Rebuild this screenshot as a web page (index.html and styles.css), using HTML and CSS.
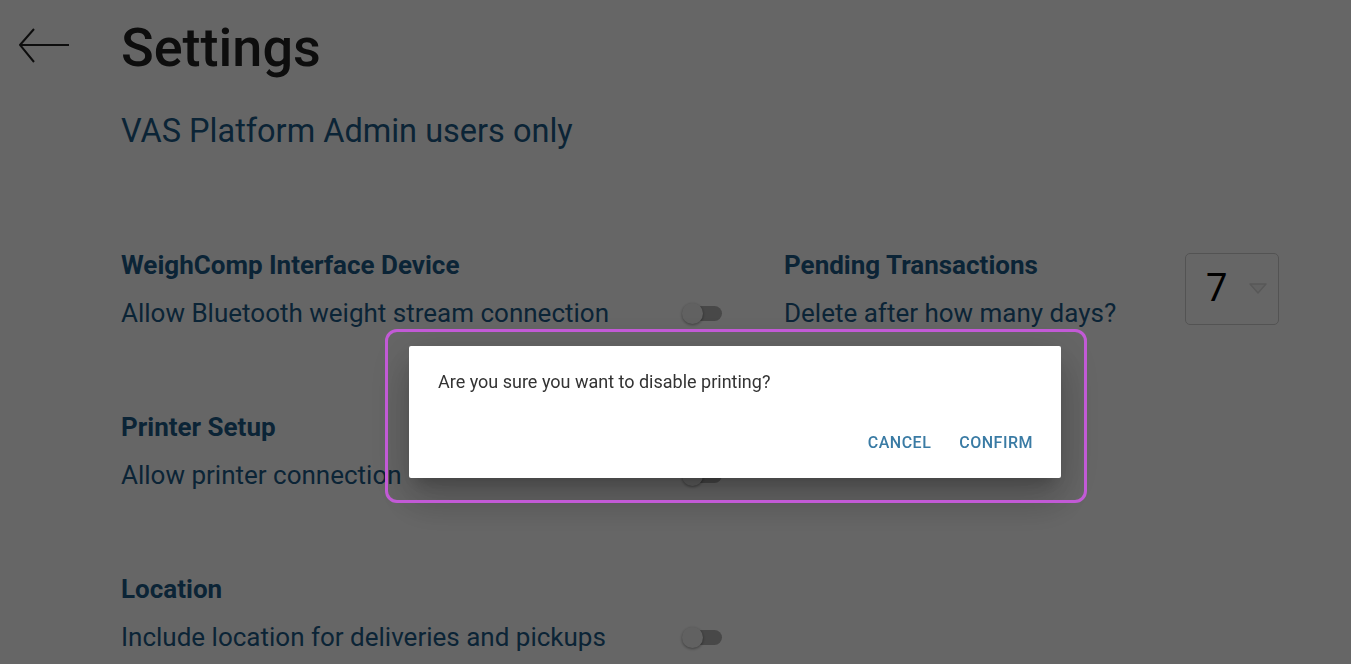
FILE: index.html
```html
<!DOCTYPE html>
<html lang="en">
<head>
    <meta charset="UTF-8">
    <meta name="viewport" content="width=device-width, initial-scale=1.0">
    <title>Settings</title>
    <link rel="stylesheet" href="styles.css">
</head>
<body>
    <div class="page">
        <div class="topbar">
            <svg class="back" width="50" height="36" viewBox="0 0 50 36">
                <path d="M1 17 H50 M15 1 L1 17 L15 34" fill="none" stroke="#222" stroke-width="2"/>
            </svg>
            <h1>Settings</h1>
        </div>

        <div class="content">
            <h2 class="subtitle">VAS Platform Admin users only</h2>

            <div class="settings-grid">
                <div class="setting">
                    <div class="setting-title">WeighComp Interface Device</div>
                    <div class="setting-row">
                        <span>Allow Bluetooth weight stream connection</span>
                        <span class="switch"><span class="thumb"></span></span>
                    </div>
                </div>

                <div class="setting setting-select">
                    <div>
                        <div class="setting-title">Pending Transactions</div>
                        <div class="setting-row">
                            <span>Delete after how many days?</span>
                        </div>
                    </div>
                    <div class="select">
                        <span>7</span>
                        <svg width="18" height="11" viewBox="0 0 18 11">
                            <path d="M1 1 H17 L9 10 Z" fill="#f4f4f4" stroke="#dcdcdc" stroke-width="1.5" stroke-linejoin="round"/>
                        </svg>
                    </div>
                </div>

                <div class="setting">
                    <div class="setting-title">Printer Setup</div>
                    <div class="setting-row">
                        <span>Allow printer connection</span>
                        <span class="switch"><span class="thumb"></span></span>
                    </div>
                </div>
                <div></div>

                <div class="setting">
                    <div class="setting-title">Location</div>
                    <div class="setting-row">
                        <span>Include location for deliveries and pickups</span>
                        <span class="switch"><span class="thumb"></span></span>
                    </div>
                </div>
                <div></div>
            </div>
        </div>
    </div>

    <div class="overlay">
        <div class="dialog">
            <p>Are you sure you want to disable printing?</p>
            <div class="dialog-actions">
                <button class="text-btn">Cancel</button>
                <button class="text-btn">Confirm</button>
            </div>
        </div>
        <div class="highlight"></div>
    </div>
</body>
</html>
```

FILE: styles.css
```css
body {
    margin: 0;
    font-family: Roboto, "Liberation Sans", sans-serif;
    background: #fff;
    overflow: hidden;
}
.page {
    padding: 16px 0 0 19px;
}
.topbar {
    display: flex;
    align-items: flex-start;
    gap: 52px;
}
.back {
    margin-top: 12px;
}
h1 {
    margin: 0;
    font-size: 54px;
    line-height: 64px;
    font-weight: 500;
    color: #222;
}
.content {
    padding-left: 102px;
}
.subtitle {
    margin: 31px 0 0;
    font-size: 32.5px;
    line-height: 40px;
    font-weight: 400;
    color: #1c5a88;
}
.settings-grid {
    display: grid;
    grid-template-columns: 601px 495px;
    column-gap: 62px;
    row-gap: 82px;
    margin-top: 98px;
}
.setting {
    color: #1c5a88;
    font-size: 26px;
    line-height: 32px;
}
.setting-title {
    font-weight: 700;
    margin-bottom: 16px;
}
.setting-row {
    display: flex;
    justify-content: space-between;
    align-items: center;
}
.setting-select {
    display: flex;
    justify-content: space-between;
    align-items: center;
}
.switch {
    position: relative;
    width: 40px;
    height: 20px;
    flex-shrink: 0;
}
.switch::before {
    content: "";
    position: absolute;
    left: 4px;
    right: 0;
    top: 3px;
    height: 15px;
    border-radius: 8px;
    background: #b4b4b4;
}
.thumb {
    position: absolute;
    left: 0;
    top: 0;
    width: 21px;
    height: 21px;
    border-radius: 50%;
    background: #f2f2f2;
    box-shadow: 0 1px 3px rgba(0,0,0,0.4);
}
.select {
    width: 94px;
    height: 72px;
    box-sizing: border-box;
    border: 1.5px solid #cfcfcf;
    border-radius: 5px;
    display: flex;
    align-items: center;
    justify-content: space-between;
    padding: 0 11px 2px 20px;
    font-size: 38px;
    color: #000;
}
.overlay {
    position: fixed;
    inset: 0;
    background: rgba(0,0,0,0.6);
}
.dialog {
    position: absolute;
    left: 409px;
    top: 346px;
    width: 652px;
    height: 132px;
    box-sizing: border-box;
    background: #fff;
    border-radius: 2px;
    padding: 24px 20px 18px 29px;
    box-shadow: 0 11px 15px -7px rgba(0,0,0,0.2), 0 24px 38px 3px rgba(0,0,0,0.14), 0 9px 46px 8px rgba(0,0,0,0.12);
    display: flex;
    flex-direction: column;
    justify-content: space-between;
}
.dialog p {
    margin: 0;
    font-size: 18px;
    line-height: 24px;
    color: #333;
}
.dialog-actions {
    display: flex;
    justify-content: flex-end;
    gap: 12px;
}
.text-btn {
    background: none;
    border: none;
    font-family: Roboto, sans-serif;
    font-size: 16px;
    font-weight: 500;
    letter-spacing: 0.5px;
    text-transform: uppercase;
    color: #3a7ba4;
    padding: 0 8px;
    height: 36px;
}
.highlight {
    position: absolute;
    left: 385px;
    top: 329px;
    width: 702px;
    height: 174px;
    box-sizing: border-box;
    border: 3px solid #c25ad6;
    border-radius: 12px;
}
```
